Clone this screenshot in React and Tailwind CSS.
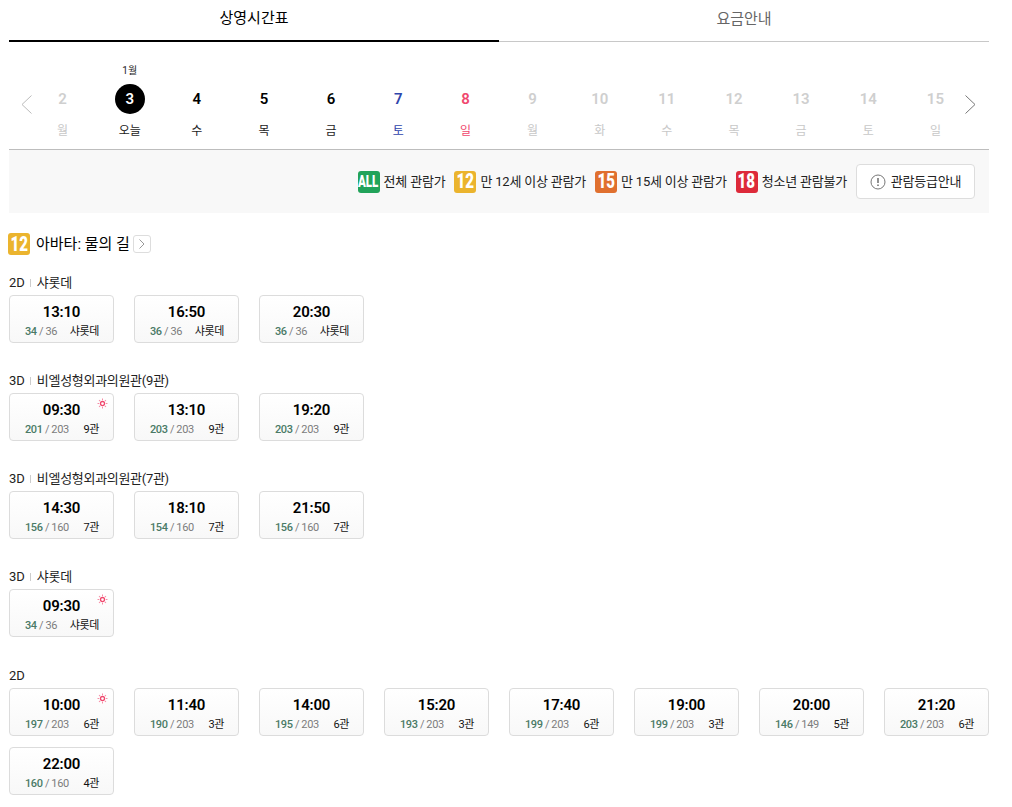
const days = [
  ["2", "월", "off"], ["3", "오늘", "today"], ["4", "수", "on"], ["5", "목", "on"], ["6", "금", "on"],
  ["7", "토", "sat"], ["8", "일", "sun"], ["9", "월", "off"], ["10", "화", "off"], ["11", "수", "off"],
  ["12", "목", "off"], ["13", "금", "off"], ["14", "토", "off"], ["15", "일", "off"],
];

const dayColor = {
  off: "text-[#cfcfcf]",
  on: "text-black",
  sat: "text-[#2f45ab]",
  sun: "text-[#f0486e]",
};

const dayLabelColor = {
  off: "text-[#c8c8c8]",
  today: "text-[#222]",
  on: "text-[#222]",
  sat: "text-[#2f45ab]",
  sun: "text-[#f0486e]",
};

const sections = [
  { type: "2D", place: "샤롯데", times: [["13:10", "34", "36", "샤롯데"], ["16:50", "36", "36", "샤롯데"], ["20:30", "36", "36", "샤롯데"]] },
  { type: "3D", place: "비엘성형외과의원관(9관)", times: [["09:30", "201", "203", "9관", true], ["13:10", "203", "203", "9관"], ["19:20", "203", "203", "9관"]] },
  { type: "3D", place: "비엘성형외과의원관(7관)", times: [["14:30", "156", "160", "7관"], ["18:10", "154", "160", "7관"], ["21:50", "156", "160", "7관"]] },
  { type: "3D", place: "샤롯데", times: [["09:30", "34", "36", "샤롯데", true]] },
  {
    type: "2D",
    times: [
      ["10:00", "197", "203", "6관", true], ["11:40", "190", "203", "3관"], ["14:00", "195", "203", "6관"],
      ["15:20", "193", "203", "3관"], ["17:40", "199", "203", "6관"], ["19:00", "199", "203", "3관"],
      ["20:00", "146", "149", "5관"], ["21:20", "203", "203", "6관"], ["22:00", "160", "160", "4관"],
    ],
  },
];

const Rating = ({ label, color }) => (
  <span className={`flex shrink-0 items-center justify-center rounded-[3px] w-[22px] h-[22px] text-white leading-none tracking-normal ${color}`}>
    <span className={`inline-block scale-x-[0.72] font-['Roboto'] font-black ${label === "ALL" ? "text-[16px]" : "text-[21px]"}`}>{label}</span>
  </span>
);

const Sun = () => (
  <svg viewBox="0 0 12 12" className="absolute right-[5px] top-[4px] w-[11px] h-[11px]">
    <circle cx="6" cy="6" r="2.2" fill="none" stroke="#f0486e" strokeWidth="1.4" />
    <path d="M6 .6v1.8M6 9.6v1.8M.6 6h1.8M9.6 6h1.8M2.2 2.2l1.2 1.2M8.6 8.6l1.2 1.2M2.2 9.8l1.2-1.2M8.6 3.4l1.2-1.2" stroke="#f78ba4" strokeWidth="1.1" />
  </svg>
);

const TimeCard = ({ time, seats, total, hall, morning }) => (
  <div className="relative w-[105px] h-[48px] rounded-[4px] border border-[#dcdcdc] bg-gradient-to-b from-white to-[#f8f8f8]">
    {morning && <Sun />}
    <div className="mt-[7px] text-center text-[15px] leading-[18px] tracking-[-0.2px] font-semibold text-black">{time}</div>
    <div className="mt-[4px] pl-[15px] pr-[14px] flex justify-between items-center text-[11px] leading-[14px] tracking-[-0.4px]">
      <span className="text-[#7c7c7c] whitespace-nowrap">
        <span className="font-medium text-[#4a7a66]">{seats}</span> / {total}
      </span>
      <span className="text-[#111] whitespace-nowrap">{hall}</span>
    </div>
  </div>
);

export default function App() {
  return (
    <div className="w-[980px] ml-[9px] font-['Roboto','Noto_Sans_CJK_KR',sans-serif] bg-white">
      <div className="flex h-[42px]">
        <div className="w-1/2 border-b-2 border-black flex items-center justify-center text-[15px] text-black pb-[3px]">상영시간표</div>
        <div className="w-1/2 border-b border-[#c8c8c8] flex items-center justify-center text-[15px] text-[#666] pb-[3px]">요금안내</div>
      </div>

      <div className="relative h-[108px] border-b border-[#bdbdbd] px-[20px]">
        <svg viewBox="0 0 11 19" className="absolute left-[12px] top-[53px] w-[11px] h-[19px]">
          <path d="M10.5.5 1 9.5l9.5 9" fill="none" stroke="#bbb" strokeWidth="1" />
        </svg>
        <svg viewBox="0 0 11 19" className="absolute right-[13px] top-[53px] w-[11px] h-[19px]">
          <path d="M.5.5 10 9.5l-9.5 9" fill="none" stroke="#777" strokeWidth="1" />
        </svg>
        <div className="grid grid-cols-14">
          {days.map(([num, label, kind]) => (
            <div key={num} className="relative flex flex-col items-center pt-[42px]">
              {kind === "today" && <span className="absolute top-[22px] text-[10px] leading-[14px] text-[#222]">1월</span>}
              <span className={`w-[30px] h-[30px] rounded-full flex items-center justify-center text-[15px] font-semibold ${kind === "today" ? "bg-black text-white" : dayColor[kind]}`}>{num}</span>
              <span className={`mt-[9px] text-[12px] leading-[16px] ${dayLabelColor[kind]}`}>{label}</span>
            </div>
          ))}
        </div>
      </div>

      <div className="h-[63px] bg-[#f8f8f8] flex items-center justify-end pr-[14px] text-[13px] tracking-[-0.2px] text-[#222]">
        <Rating label="ALL" color="bg-[#22a35a]" />
        <span className="ml-[4px]">전체 관람가</span>
        <span className="ml-[9px]"><Rating label="12" color="bg-[#ebb42e]" /></span>
        <span className="ml-[4px]">만 12세 이상 관람가</span>
        <span className="ml-[9px]"><Rating label="15" color="bg-[#e0702f]" /></span>
        <span className="ml-[4px]">만 15세 이상 관람가</span>
        <span className="ml-[9px]"><Rating label="18" color="bg-[#dd2a3a]" /></span>
        <span className="ml-[4px]">청소년 관람불가</span>
        <button className="ml-[9px] h-[35px] w-[119px] rounded-[4px] border border-[#ddd] bg-white flex items-center justify-center gap-[5px]">
          <svg viewBox="0 0 16 16" className="w-[16px] h-[16px]">
            <circle cx="8" cy="8" r="7" fill="none" stroke="#777" strokeWidth="1" />
            <path d="M8 4v5M8 10.6v1.4" stroke="#555" strokeWidth="1.3" />
          </svg>
          관람등급안내
        </button>
      </div>

      <div className="mt-[20px] -ml-[1px] flex items-center h-[22px]">
        <Rating label="12" color="bg-[#ebb42e]" />
        <span className="ml-[6px] text-[15px] text-black">아바타: 물의 길</span>
        <span className="ml-[3px] w-[18px] h-[18px] rounded-[3px] border border-[#ddd] flex items-center justify-center">
          <svg viewBox="0 0 6 10" className="w-[6px] h-[10px]">
            <path d="M.5.5 5 5 .5 9.5" fill="none" stroke="#999" strokeWidth="1" />
          </svg>
        </span>
      </div>

      <div className="mt-[19px]">
        {sections.map((s, i) => (
          <div key={i} className="mb-[29px] last:mt-[30px]">
            <div className="flex items-center h-[18px] text-[13px] text-[#222]">
              <span>{s.type}</span>
              {s.place && <span className="ml-[5px] mr-[6px] h-[8px] w-px bg-[#ccc]" />}
              {s.place && <span className="tracking-[-0.3px]">{s.place}</span>}
            </div>
            <div className="mt-[3px] flex flex-wrap gap-x-[20px] gap-y-[11px]">
              {s.times.map(([time, seats, total, hall, morning]) => (
                <TimeCard key={time} time={time} seats={seats} total={total} hall={hall} morning={morning} />
              ))}
            </div>
          </div>
        ))}
      </div>
    </div>
  );
}
